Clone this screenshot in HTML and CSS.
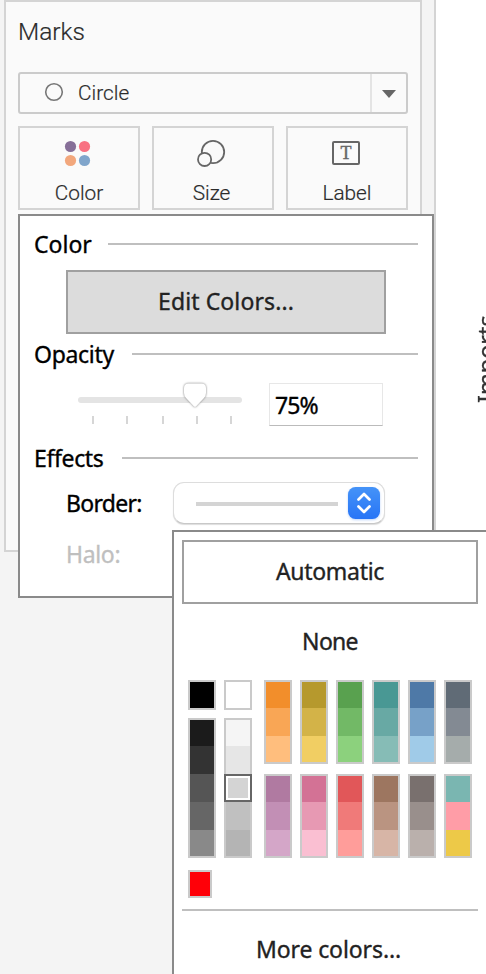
FILE: index.html
```html
<!DOCTYPE html>
<html lang="en">
<head>
<meta charset="utf-8">
<title>Marks</title>
<link rel="stylesheet" href="styles.css">
</head>
<body>
<div class="app">
  <aside class="sidebar">
    <section class="card">
      <h1 class="card-title"><span>Marks</span></h1>
      <div class="mark-select">
        <svg class="circle-icon" width="20" height="20" viewBox="0 0 20 20"><circle cx="10" cy="10" r="8.3" fill="none" stroke="#777" stroke-width="1.6"/></svg>
        <span class="mark-name">Circle</span>
        <span class="mark-arrow"><svg width="14" height="8" viewBox="0 0 14 8"><path d="M0 0H14L7 8Z" fill="#666"/></svg></span>
      </div>
      <div class="mark-buttons">
        <div class="mark-button">
          <svg width="32" height="32" viewBox="0 0 32 32"><circle cx="7.5" cy="10.5" r="5.6" fill="#866f98"/><circle cx="21.5" cy="10.5" r="5.6" fill="#f87182"/><circle cx="7.5" cy="24.5" r="5.6" fill="#f2a77c"/><circle cx="21.5" cy="24.5" r="5.6" fill="#80a5cb"/></svg>
          <span>Color</span>
        </div>
        <div class="mark-button size-button">
          <svg width="32" height="32" viewBox="0 0 32 32"><g fill="#fafafa" stroke="#666" stroke-width="1.8"><circle cx="17" cy="16" r="11.2"/><circle cx="8.6" cy="23.4" r="6.6"/></g></svg>
          <span>Size</span>
        </div>
        <div class="mark-button">
          <svg width="32" height="32" viewBox="0 0 32 32"><rect x="2" y="6" width="26" height="22" rx="1" fill="none" stroke="#666" stroke-width="2"/><text class="icon-letter" x="15" y="23.2" text-anchor="middle">T</text></svg>
          <span>Label</span>
        </div>
      </div>
    </section>
  </aside>
  <main class="view"><span class="axis-title">Imports</span></main>

  <div class="color-popup">
    <div class="group-head head-color"><span>Color</span><i></i></div>
    <div class="edit-colors"><span>Edit Colors...</span></div>
    <div class="group-head head-opacity"><span>Opacity</span><i></i></div>
    <div class="opacity-row">
      <svg class="slider" width="172" height="50" viewBox="0 0 172 50">
        <rect x="4" y="18" width="164" height="6" rx="3" fill="#e4e4e4"/>
        <path d="M18 37h2v8h-2zM52 37h2v8h-2zM88 37h2v8h-2zM122 37h2v8h-2zM156 37h2v8h-2z" fill="#d6d6d6"/>
        <path class="thumb" d="M114.5 4.5H127.5Q132 4.500 132 9V14Q132 17 130 19L122.200 27.200Q121 28.400 119.800 27.200L112 19Q110 17 110 14V9Q110 4.500 114.500 4.500Z"/>
      </svg>
      <div class="opacity-value"><span>75%</span></div>
    </div>
    <div class="group-head head-effects"><span>Effects</span><i></i></div>
    <div class="effect-row">
      <span class="effect-label">Border:</span>
      <div class="border-select">
        <i class="border-sample"></i>
        <svg class="stepper" width="32" height="32" viewBox="0 0 32 32"><defs><linearGradient id="blue" x2="0" y2="1"><stop stop-color="#4593f8"/><stop offset="1" stop-color="#2875f6"/></linearGradient></defs><rect width="32" height="32" rx="7.500" fill="url(#blue)"/><path d="M10.500 12.500L16 7L21.500 12.500M10.500 19.500L16 25L21.500 19.500" fill="none" stroke="#fff" stroke-width="2.700" stroke-linecap="round" stroke-linejoin="round"/></svg>
      </div>
    </div>
    <div class="halo-row"><span class="halo-label">Halo:</span></div>
  </div>

  <div class="border-menu">
    <div class="automatic"><span>Automatic</span></div>
    <div class="none"><span>None</span></div>
    <div class="palette">
      <div class="neutrals">
        <div class="neutral-column">
          <div class="ramp single"><b class="black"></b></div>
          <div class="ramp"><b class="k1"></b><b class="k2"></b><b class="k3"></b><b class="k4"></b><b class="k5"></b></div>
        </div>
        <div class="neutral-column">
          <div class="ramp single"><b class="white"></b></div>
          <div class="ramp"><b class="w1"></b><b class="w2"></b><b class="w3 selected"></b><b class="w4"></b><b class="w5"></b></div>
        </div>
      </div>
      <div class="hues">
        <div class="ramp"><b class="orange1"></b><b class="orange2"></b><b class="orange3"></b></div>
        <div class="ramp"><b class="gold1"></b><b class="gold2"></b><b class="gold3"></b></div>
        <div class="ramp"><b class="green1"></b><b class="green2"></b><b class="green3"></b></div>
        <div class="ramp"><b class="teal1"></b><b class="teal2"></b><b class="teal3"></b></div>
        <div class="ramp"><b class="blue1"></b><b class="blue2"></b><b class="blue3"></b></div>
        <div class="ramp"><b class="slate1"></b><b class="slate2"></b><b class="slate3"></b></div>
        <div class="ramp"><b class="purple1"></b><b class="purple2"></b><b class="purple3"></b></div>
        <div class="ramp"><b class="pink1"></b><b class="pink2"></b><b class="pink3"></b></div>
        <div class="ramp"><b class="red1"></b><b class="red2"></b><b class="red3"></b></div>
        <div class="ramp"><b class="brown1"></b><b class="brown2"></b><b class="brown3"></b></div>
        <div class="ramp"><b class="taupe1"></b><b class="taupe2"></b><b class="taupe3"></b></div>
        <div class="ramp"><b class="mix1"></b><b class="mix2"></b><b class="mix3"></b></div>
      </div>
    </div>
    <div class="custom-color"></div>
    <div class="menu-rule"></div>
    <div class="more"><span>More colors...</span></div>
  </div>
</div>
</body>
</html>
```

FILE: styles.css
```css
* { box-sizing: border-box; }
body { margin: 0; background: #fff; overflow: hidden; font-family: "Noto Sans", sans-serif; font-size: 23px; color: #000; }
svg { display: block; flex: none; }
span { white-space: nowrap; }
.app { position: relative; display: flex; width: 486px; height: 974px; overflow: hidden; }
.sidebar { width: 436px; flex: none; background: #f4f4f4; border-right: 2px solid #d4d4d4; padding-left: 4px; font-family: Roboto, sans-serif; font-weight: 300; -webkit-text-stroke: .2px; color: #2b2b2b; }
.card { width: 418px; height: 552px; border: 2px solid #d4d4d4; background: #fafafa; padding: 0 12px; }
.card-title { margin: 0; height: 70px; padding-top: 14px; font-size: 24.5px; line-height: 32px; font-weight: 300; }
.mark-select { height: 42px; border: 2px solid #cbcbcb; border-radius: 3px; display: flex; align-items: center; }
.circle-icon { margin: -3px 14px 0 24px; }
.mark-name { font-size: 20.8px; line-height: 38px; }
.mark-arrow { margin-left: auto; width: 36px; height: 38px; border-left: 2px solid #e4e4e4; display: flex; align-items: center; padding-left: 10px; padding-top: 2px; }
.mark-buttons { display: grid; grid-template-columns: repeat(3, 122px); gap: 12px; margin-top: 12px; }
.mark-button { height: 84px; border: 2px solid #d4d4d4; display: flex; flex-direction: column; align-items: center; padding-top: 8px; font-size: 20.8px; }
.size-button { padding-right: 3px; }
.mark-button span { line-height: 28px; margin-top: 11px; }
.icon-letter { font: 18px "Liberation Serif", serif; fill: #666; stroke: #666; stroke-width: .4px; }
.view { flex: 1; padding: 311px 0 0 34px; overflow: hidden; }
.axis-title { display: block; writing-mode: vertical-rl; transform: rotate(180deg); line-height: 32px; height: 92px; width: 32px; font-size: 23.4px; -webkit-text-stroke: .3px; color: #333; }

.color-popup, .border-menu { -webkit-text-stroke: .35px; letter-spacing: -.1px; }
.color-popup { position: absolute; left: 18px; top: 214px; width: 416px; height: 384px; border: 2px solid #8a8a8a; background: #fff; padding: 12px 14px 0; }
.group-head { display: flex; align-items: center; height: 32px; }
.group-head span { line-height: 34px; }
.group-head i { height: 2px; flex: 1; margin-top: -1px; background: #bfbfbf; }
.head-color span { width: 74px; letter-spacing: 0; }
.edit-colors { width: 320px; height: 64px; margin: 10px 0 0 32px; border: 2px solid #a0a0a0; background: #dcdcdc; color: #222; text-align: center; line-height: 58px; letter-spacing: .1px; }
.head-opacity { margin-top: 4px; }
.head-opacity span { width: 98px; letter-spacing: -.3px; }
.opacity-row { display: flex; margin: 9px 0 0 40px; height: 50px; }
.thumb { fill: #fff; filter: drop-shadow(0 .6px .8px #777); }
.opacity-value { width: 114px; height: 43px; margin: 4px 0 0 23px; border: 1px solid #e7e7e7; border-bottom-color: #bbb; padding-left: 5px; line-height: 42px; letter-spacing: -.9px; }
.head-effects { margin-top: 13px; }
.head-effects span { width: 88px; letter-spacing: -.35px; }
.effect-row { display: flex; height: 42px; margin: 8px 0 0 32px; align-items: center; }
.effect-label { width: 107px; letter-spacing: -.7px; }
.border-select { width: 212px; height: 42px; border-radius: 11px; background: #fff; border: 1px solid #ddd; border-bottom-color: #c8c8c8; box-shadow: 0 1px 1px #ddd; display: flex; padding: 4px 4px 0 22px; }
.border-sample { width: 142px; height: 4px; margin: 15px 10px 0 0; background: #d4d4d4; }
.stepper { filter: drop-shadow(0 1px 1px #bcd4fb); }
.halo-row { margin: 14px 0 0 32px; line-height: 32px; color: #bfbfbf; letter-spacing: -.35px; }

.border-menu { position: absolute; left: 172px; top: 530px; width: 316px; height: 460px; border: 2px solid #8a8a8a; background: #fff; padding: 8px; color: #222; }
.automatic { height: 64px; border: 2px solid #a0a0a0; text-align: center; line-height: 58px; letter-spacing: -.3px; }
.none { height: 76px; text-align: center; line-height: 74px; letter-spacing: -.7px; }
.palette { display: flex; gap: 12px; padding-left: 6px; }
.neutrals { display: flex; gap: 8px; }
.neutral-column { display: flex; flex-direction: column; gap: 8px; }
.hues { display: grid; grid-template-columns: repeat(6, 28px); gap: 10px 8px; }
.ramp { width: 28px; border: 2px solid #cacaca; display: flex; flex-direction: column; }
.ramp b { height: 28px; width: 24px; }
.ramp b:first-child, .ramp b:last-child { height: 26px; }
.ramp .selected { width: 28px; margin: 0 -2px; border: 2px solid #666; box-shadow: inset 0 0 0 2px #fff; }
.custom-color { width: 24px; height: 28px; margin: 12px 0 0 6px; border: 2px solid #cacaca; background: #ff0008; }
.menu-rule { height: 2px; margin-top: 11px; background: #bfbfbf; }
.more { text-align: center; line-height: 76px; padding-right: 3px; }

.black { background: #000; }
.white { background: #fff; }
.k1 { background: #1b1b1b; } .k2 { background: #333; } .k3 { background: #555; } .k4 { background: #666; } .k5 { background: #898989; }
.w1 { background: #f5f5f5; } .w2 { background: #e6e6e6; } .w3 { background: #d4d4d4; } .w4 { background: #c0c0c0; } .w5 { background: #b4b4b4; }
.orange1 { background: #f28e2b; } .orange2 { background: #f9a655; } .orange3 { background: #ffbe7d; }
.gold1 { background: #b6992d; } .gold2 { background: #d3b348; } .gold3 { background: #f1ce63; }
.green1 { background: #59a14f; } .green2 { background: #72b966; } .green3 { background: #8cd17d; }
.teal1 { background: #499894; } .teal2 { background: #68a9a4; } .teal3 { background: #86bcb6; }
.blue1 { background: #4e79a7; } .blue2 { background: #77a1c8; } .blue3 { background: #a0cbe8; }
.slate1 { background: #606b76; } .slate2 { background: #838a93; } .slate3 { background: #a5acab; }
.purple1 { background: #b07aa1; } .purple2 { background: #c28fb5; } .purple3 { background: #d4a6c8; }
.pink1 { background: #d37295; } .pink2 { background: #e799b3; } .pink3 { background: #fabfd2; }
.red1 { background: #e15759; } .red2 { background: #f07a79; } .red3 { background: #ff9d9a; }
.brown1 { background: #9d7660; } .brown2 { background: #ba9481; } .brown3 { background: #d7b5a6; }
.taupe1 { background: #79706e; } .taupe2 { background: #998f8c; } .taupe3 { background: #bab0ac; }
.mix1 { background: #7ab6b1; } .mix2 { background: #ff9da7; } .mix3 { background: #edc948; }
```
